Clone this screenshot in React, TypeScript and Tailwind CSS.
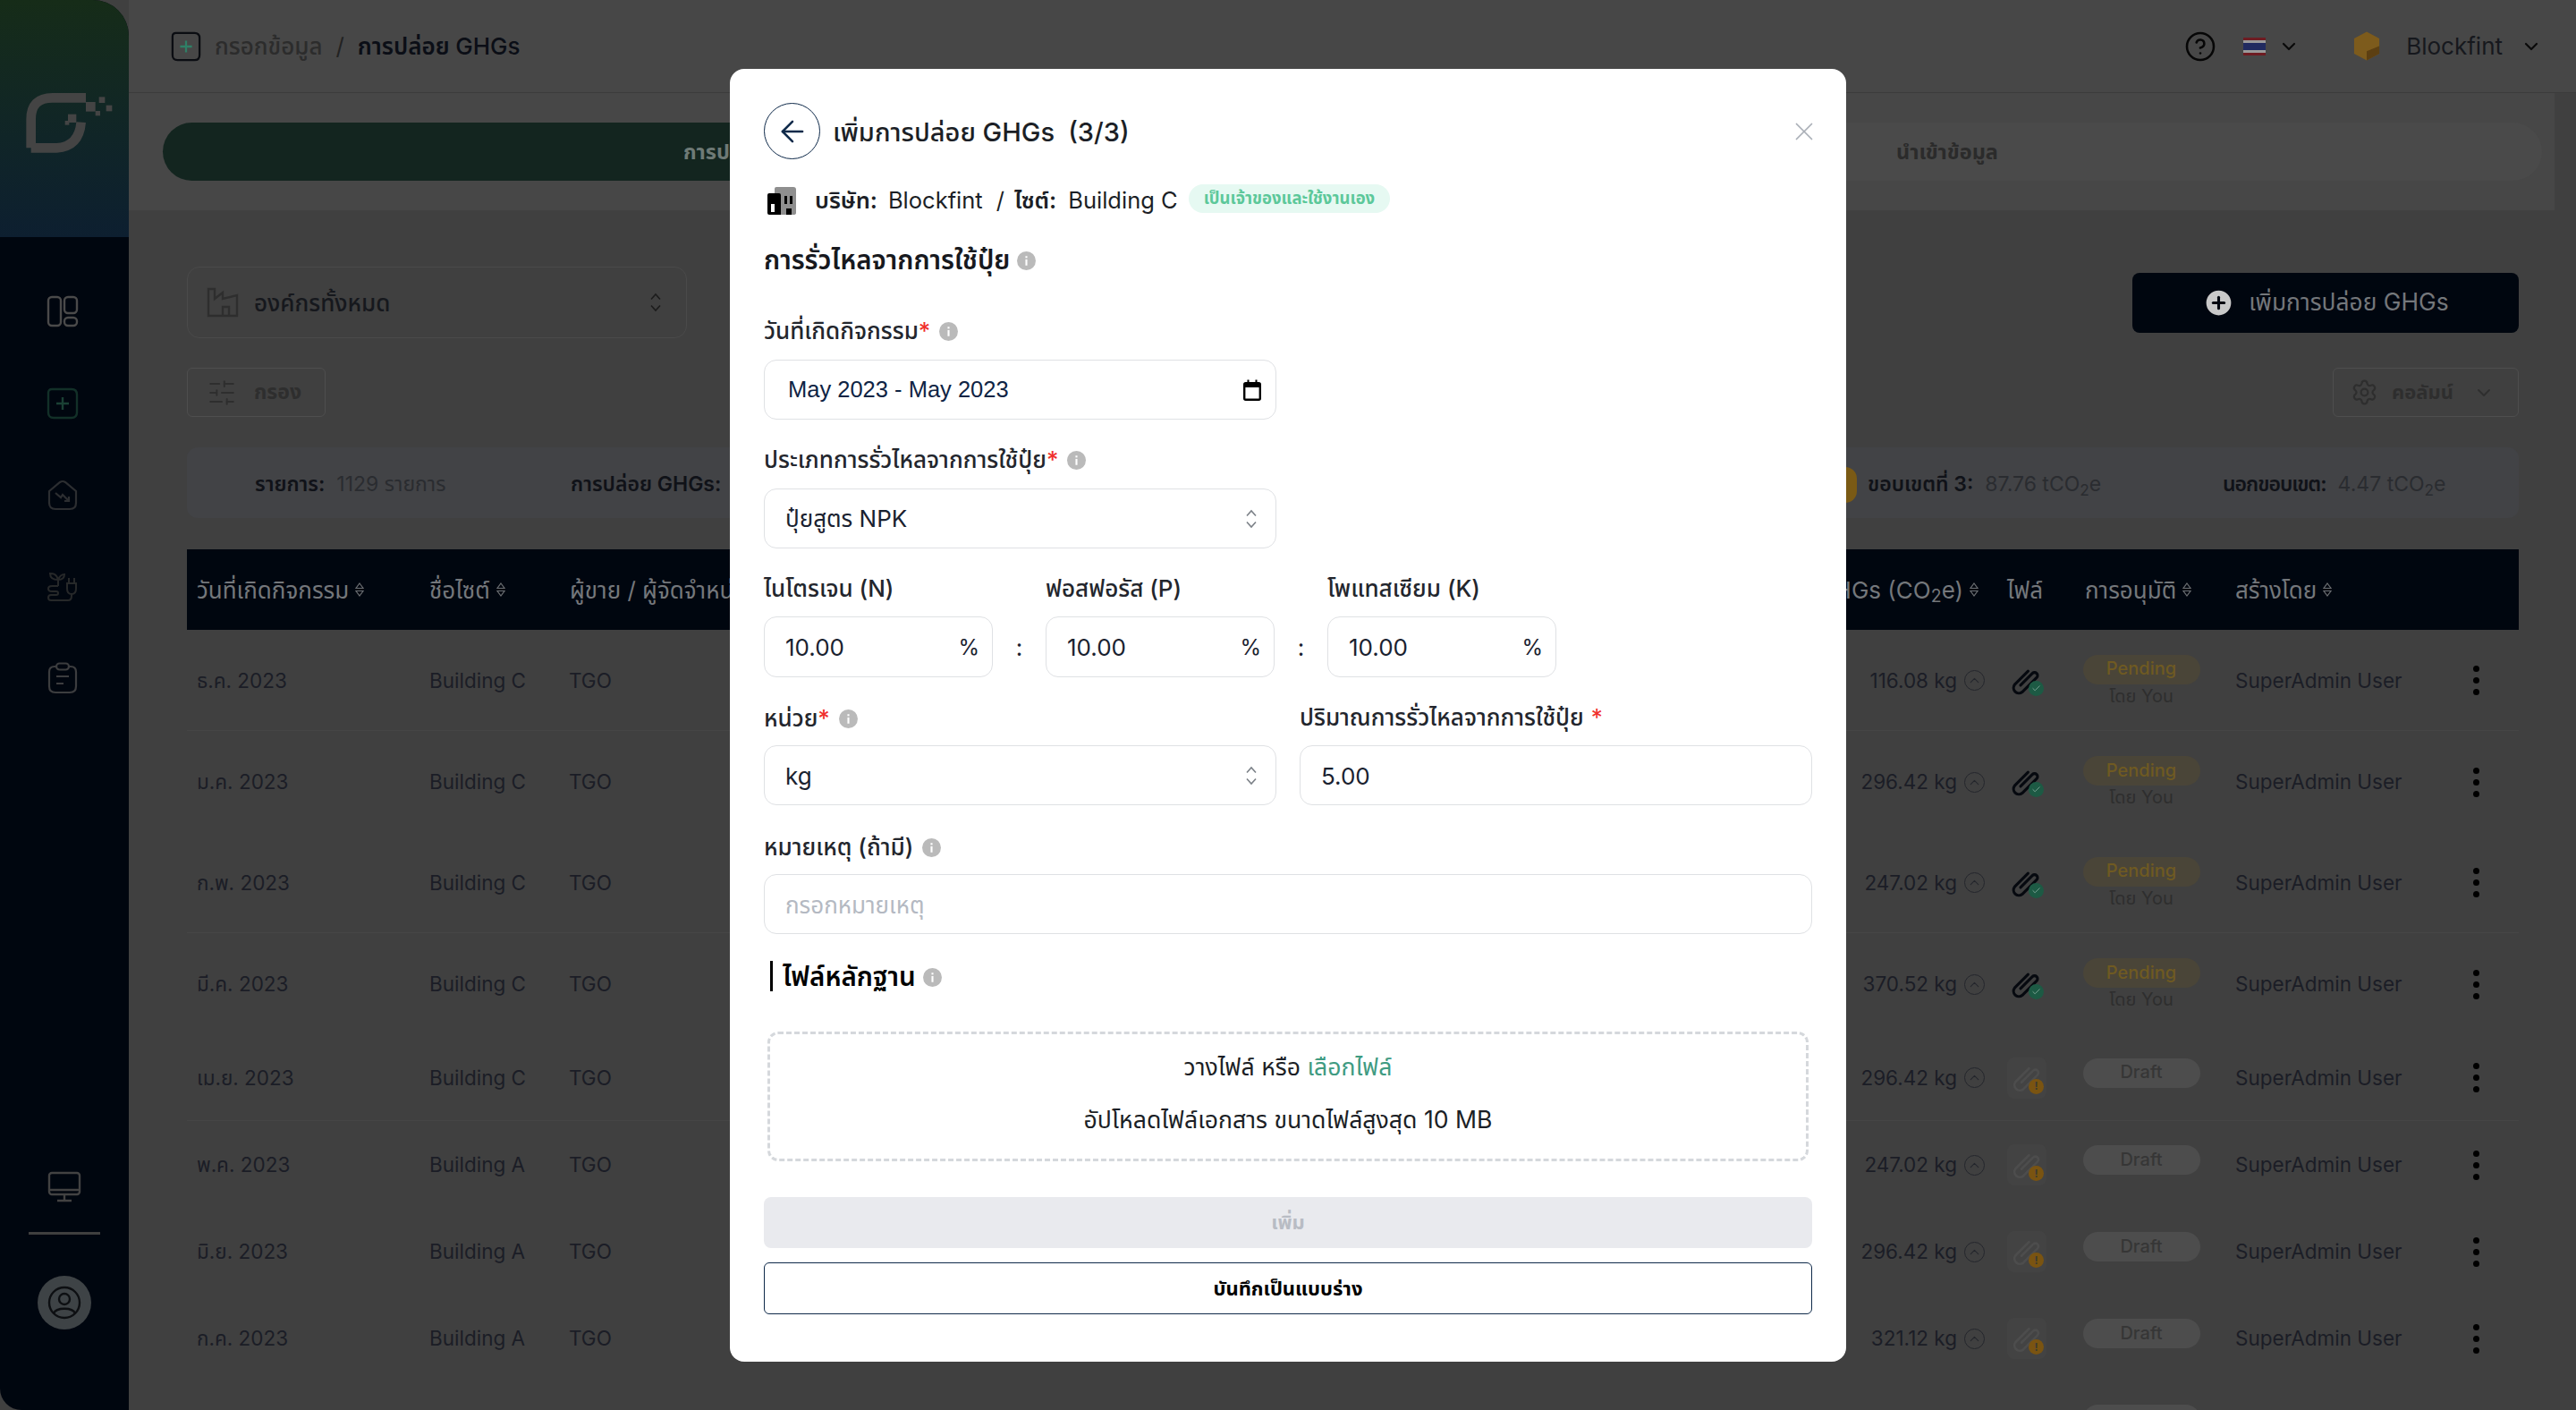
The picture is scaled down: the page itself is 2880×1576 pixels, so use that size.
import React from 'react'
import { ArrowLeft, X, Check, ChevronDown, ChevronUp, CirclePlus, SlidersHorizontal, Settings, CircleHelp } from 'lucide-react'

type Row = {
  date: string
  site: string
  value: string
  status: 'Pending' | 'Draft'
  line?: boolean
}

const rows: Row[] = [
  { date: 'ธ.ค. 2023', site: 'Building C', value: '116.08 kg', status: 'Pending', line: true },
  { date: 'ม.ค. 2023', site: 'Building C', value: '296.42 kg', status: 'Pending' },
  { date: 'ก.พ. 2023', site: 'Building C', value: '247.02 kg', status: 'Pending', line: true },
  { date: 'มี.ค. 2023', site: 'Building C', value: '370.52 kg', status: 'Pending' },
  { date: 'เม.ย. 2023', site: 'Building C', value: '296.42 kg', status: 'Draft', line: true },
  { date: 'พ.ค. 2023', site: 'Building A', value: '247.02 kg', status: 'Draft' },
  { date: 'มิ.ย. 2023', site: 'Building A', value: '296.42 kg', status: 'Draft' },
  { date: 'ก.ค. 2023', site: 'Building A', value: '321.12 kg', status: 'Draft' },
]

const tableCols = 'grid grid-cols-[260px_157px_1fr_300px_87px_168px_252px_76px] items-center'

const Logo = () => (
  <svg width="120" height="100" viewBox="0 0 360 300" fill="#444444">
    <path d="M44 226V130Q44 58 116 58H228M44 226H130Q205 222 212 140" fill="none" stroke="#444444" strokeWidth="32" />
    <rect x="228" y="72" width="32" height="32" />
    <rect x="272" y="55" width="20" height="20" />
    <rect x="296" y="83" width="20" height="20" />
    <rect x="260" y="102" width="16" height="16" />
    <rect x="168" y="113" width="28" height="28" />
    <rect x="158" y="135" width="14" height="14" />
  </svg>
)

const DashIcon = () => (
  <svg width="36" height="36" viewBox="0 0 36 36" fill="none" stroke="#4a4a4a" strokeWidth="2.4">
    <rect x="2" y="2" width="14" height="32" rx="4" />
    <rect x="20" y="2" width="14" height="18" rx="4" />
    <rect x="20" y="25" width="14" height="9" rx="4" />
  </svg>
)

const PlusBox = ({ color, plus, size }: { color: string; plus: string; size: number }) => (
  <svg width={size} height={size} viewBox="0 0 36 36" fill="none" stroke={color} strokeWidth="2.4">
    <path d="M6 2H28Q34 2 34 8V28Q34 34 28 34H8Q2 34 2 28V6Q2 2 6 2Z" />
    <path d="M18 11V25M11 18H25" stroke={plus} />
  </svg>
)

const HomeIcon = () => (
  <svg width="36" height="36" viewBox="0 0 36 36" fill="none" stroke="#2c2e31" strokeWidth="2.2">
    <path d="M3 14L15 4Q18 2 21 4L33 14V27Q33 34 26 34H10Q3 34 3 27Z" />
    <path d="M10 16L16 21L18 18L25 25M25 20V25H20" />
  </svg>
)

const PlantIcon = () => (
  <svg width="36" height="36" viewBox="0 0 36 36" fill="none" stroke="#262829" strokeWidth="2">
    <path d="M13 17V10M13 10C11 3 7 3 4 3C4 8 8 10 13 10ZM13 10C15 5 18 4 20 4C20 8 17 10 13 10Z" />
    <path d="M13 17H6Q2 17 2 20Q2 23 6 23H11Q13 23 13 25Q13 27 11 27H5Q2 27 2 30Q2 33 5 33H24Q28 33 28 28V26" />
    <path d="M23 14H33V20Q33 26 28 26Q23 26 23 20ZM25 14V8M31 14V8" />
  </svg>
)

const ClipboardIcon = () => (
  <svg width="36" height="36" viewBox="0 0 36 36" fill="none" stroke="#3c3d3f" strokeWidth="2.2">
    <path d="M11 5H9Q3 5 3 11V27Q3 34 10 34H26Q33 34 33 27V11Q33 5 27 5H25" />
    <rect x="11" y="1.5" width="14" height="7" rx="3.5" />
    <path d="M11 16H25M11 24H19" />
  </svg>
)

const MonitorIcon = () => (
  <svg width="38" height="36" viewBox="0 0 38 36" fill="none" stroke="#424242" strokeWidth="2.4">
    <rect x="2" y="2" width="34" height="24" rx="3" />
    <path d="M2 21H36M19 26V33M11 33H27" />
  </svg>
)

const Factory = () => (
  <svg width="36" height="34" viewBox="0 0 36 34" fill="none" stroke="#2e2e2e" strokeWidth="2.4">
    <path d="M2 32V2H9V13L18 6V13L34 9V32Z" />
    <path d="M18 32V22H25V32" />
  </svg>
)

const Sort = () => (
  <svg width="10" height="16" viewBox="0 0 10 16" fill="none" stroke="#6b6e72" strokeWidth="1.2" className="shrink-0">
    <path d="M5 1L9 6.5H1ZM1 9.5H9L5 15Z" />
  </svg>
)

const UpDown = ({ color = '#7b8087' }: { color?: string }) => (
  <svg width="14" height="22" viewBox="0 0 14 22" fill="none" stroke={color} strokeWidth="1.6" className="shrink-0">
    <path d="M2 7.5L7 2L12 7.5M2 14.5L7 20L12 14.5" />
  </svg>
)

const Info = ({ size = 21 }: { size?: number }) => (
  <svg width={size} height={size} viewBox="0 0 20 20" className="shrink-0 translate-y-[1px]">
    <circle cx="10" cy="10" r="10" fill="#bababa" />
    <rect x="9" y="8.5" width="2" height="6.5" fill="#ffffff" />
    <rect x="9" y="5" width="2" height="2" fill="#ffffff" />
  </svg>
)

const Buildings = () => (
  <svg width="33" height="32" viewBox="0 0 33 32">
    <path d="M9 3Q9 1 11 1H30Q33 1 33 4V30Q33 32 30 32H9Z" fill="#8f8f8f" />
    <path d="M1 10Q1 8 3 8H14Q16 8 16 10V32H3Q1 32 1 30Z" fill="#000000" />
    <rect x="5" y="20" width="4" height="9" fill="#ffffff" />
    <rect x="20" y="11" width="3" height="9" fill="#000000" />
    <rect x="26" y="11" width="3" height="9" fill="#000000" />
    <rect x="22" y="25" width="6" height="7" fill="#000000" />
  </svg>
)

const CalendarIcon = () => (
  <svg width="20" height="24" viewBox="0 0 20 24" fill="none" className="shrink-0">
    <rect x="1.2" y="4.2" width="17.6" height="18.6" rx="1.5" stroke="#000000" strokeWidth="2.4" />
    <rect x="1" y="4" width="18" height="5" fill="#000000" />
    <rect x="4.5" y="0.5" width="2" height="4" fill="#000000" />
    <rect x="13.5" y="0.5" width="2" height="4" fill="#000000" />
  </svg>
)

const Clip = ({ color, width }: { color: string; width: number }) => (
  <svg width="36" height="36" viewBox="0 0 30 30" fill="none" stroke={color} strokeWidth={width} strokeLinecap="round" strokeLinejoin="round" className="shrink-0">
    <path d="M10 19L21 8a2.8 2.8 0 0 1 4 4L11.5 25.5a5 5 0 0 1-7-7L17 6" />
  </svg>
)

const FileCell = ({ ok }: { ok: boolean }) => {
  if (ok) {
    return (
      <div className="relative ml-[3px] flex h-[44px] w-[44px] items-center">
        <Clip color="#06090f" width={2.6} />
        <div className="absolute left-[21px] top-[22px] flex h-[17px] w-[17px] items-center justify-center rounded-full bg-[#1d5a44]">
          <Check size={11} strokeWidth={2} color="#7fa596" />
        </div>
      </div>
    )
  }
  return (
    <div className="relative flex h-[46px] w-[44px] items-center justify-center rounded-lg bg-[#434343]">
      <Clip color="#4d4d4d" width={2.2} />
      <div className="absolute left-[24px] top-[24px] flex h-[17px] w-[17px] items-center justify-center rounded-full bg-[#7a5411] text-[12px] font-bold leading-none text-[#3d3a33]">
        !
      </div>
    </div>
  )
}

const TableRow = ({ row }: { row: Row }) => (
  <div
    className={`${tableCols} pt-[1px] text-[22.5px] text-[#1b1d26] ${
      row.status === 'Pending' ? 'h-[113px]' : 'h-[97px]'
    } ${row.line ? 'border-b border-[#464646]' : ''}`}
  >
    <div className="pl-[11px]">{row.date}</div>
    <div className="pl-[11px]">{row.site}</div>
    <div className="pl-[10px]">TGO</div>
    <div className="flex items-center justify-end gap-[8px] pr-[14px]">
      <span>{row.value}</span>
      <div className="flex h-[23px] w-[23px] items-center justify-center rounded-full border border-[#24262c]">
        <ChevronUp size={17} strokeWidth={1.5} color="#24262c" />
      </div>
    </div>
    <div className="pl-[11px]">
      <FileCell ok={row.status === 'Pending'} />
    </div>
    <div className="flex flex-col items-center pr-[20px]">
      {row.status === 'Pending' ? (
        <>
          <div className="flex h-[33px] w-[131px] items-center justify-center rounded-full bg-[#4a4538] pb-[2px] text-[20px] font-medium text-[#6f5a22]">Pending</div>
          <div className="h-[25px] text-[20px] leading-[26px] text-[#2e2e2e]">โดย You</div>
        </>
      ) : (
        <>
          <div className="flex h-[33px] w-[131px] items-center justify-center rounded-full bg-[#4d4d4d] pb-[2px] text-[20px] font-medium text-[#363636]">Draft</div>
          <div className="h-[11px]" />
        </>
      )}
    </div>
    <div className="pl-[11px]">SuperAdmin User</div>
    <div className="flex flex-col gap-[6px] pl-[25px]">
      <div className="h-[7px] w-[7px] rounded-full bg-[#000000]" />
      <div className="h-[7px] w-[7px] rounded-full bg-[#000000]" />
      <div className="h-[7px] w-[7px] rounded-full bg-[#000000]" />
    </div>
  </div>
)

const HeadCell = ({ text, className }: { text: React.ReactNode; className?: string }) => (
  <div className={`flex items-center gap-[7px] ${className ?? ''}`}>
    <span className="whitespace-nowrap">{text}</span>
    <Sort />
  </div>
)

const Label = ({ text, required, info, className }: { text: string; required?: boolean; info?: boolean; className?: string }) => (
  <div className={`flex h-[40px] items-center gap-[10px] text-[26px] font-medium text-[#23262d] ${className ?? ''}`}>
    <span className="whitespace-nowrap">
      {text}
      {required && <span className="text-[#f0302c]">*</span>}
    </span>
    {info && <Info />}
  </div>
)

const Field = ({ children, className }: { children: React.ReactNode; className?: string }) => (
  <div className={`flex items-center rounded-[14px] border border-[#dfe1e4] pl-[23px] pt-[1px] text-[26px] text-[#1a2230] ${className ?? ''}`}>
    {children}
  </div>
)

const Npk = ({ label }: { label: string }) => (
  <div className="w-[256px]">
    <Label text={label} />
    <Field className="mt-[12px] h-[68px] justify-between pr-[14px]">
      <span>10.00</span>
      <span className="text-[24px]">%</span>
    </Field>
  </div>
)

export default function App() {
  return (
    <div className="relative flex h-screen w-screen overflow-hidden bg-[#404040] font-['Inter','Noto_Sans_Thai','Noto_Sans',sans-serif]">
      {/* sidebar */}
      <aside className="flex w-[144px] shrink-0 flex-col rounded-tr-[40px] rounded-bl-[24px] bg-[#00060f]">
        <div className="flex h-[265px] items-start rounded-tr-[40px] bg-gradient-to-b from-[#162c18] to-[#0d1f30] pl-[20px] pt-[90px]">
          <Logo />
        </div>
        <div className="mt-[65px] flex flex-col items-center gap-[66.5px] pr-[4px]">
          <DashIcon />
          <PlusBox color="#123028" plus="#1a4034" size={36} />
          <HomeIcon />
          <PlantIcon />
          <ClipboardIcon />
        </div>
        <div className="mt-auto flex flex-col items-center pb-[90px]">
          <MonitorIcon />
          <div className="mt-[32px] h-[3px] w-[80px] bg-[#3f3f3f]" />
          <div className="mt-[46px] flex h-[60px] w-[60px] items-center justify-center rounded-full bg-[#3e4346]">
            <svg width="38" height="38" viewBox="0 0 38 38" fill="none" stroke="#0d0f12" strokeWidth="2.4">
              <circle cx="19" cy="19" r="17" />
              <circle cx="19" cy="15" r="6" />
              <path d="M7 31C10 24 28 24 31 31" />
            </svg>
          </div>
        </div>
      </aside>

      <div className="flex min-w-0 flex-1 flex-col">
        {/* header */}
        <header className="flex h-[104px] shrink-0 items-center border-b border-[#3c3c3c] bg-[#474747] pl-[47px] pr-[38px]">
          <PlusBox color="#0b0d12" plus="#2f7f66" size={34} />
          <span className="ml-[15px] text-[26px] font-medium text-[#2c2c2c]">กรอกข้อมูล</span>
          <span className="ml-[15px] text-[26px] text-[#222222]">/</span>
          <span className="ml-[15px] text-[26px] font-semibold text-[#0b0e16]">การปล่อย <span className="font-medium">GHGs</span></span>
          <div className="ml-auto flex items-center">
            <CircleHelp size={36} strokeWidth={1.7} color="#060606" />
            <div className="ml-[30px] flex h-[20px] w-[25px] flex-col">
              <div className="h-[3px] bg-[#6e1c22]" />
              <div className="h-[3px] bg-[#9a9a9a]" />
              <div className="h-[8px] bg-[#212b60]" />
              <div className="h-[3px] bg-[#9a9a9a]" />
              <div className="h-[3px] bg-[#6e1c22]" />
            </div>
            <ChevronDown size={24} strokeWidth={2.2} color="#0a0a0a" className="ml-[14px]" />
            <svg width="30" height="35" viewBox="0 0 32 36" className="ml-[60px]">
              <path d="M16 1L31 9V27L16 35L1 27V9Z" fill="#7d5b1c" />
              <path d="M31 18V27L16 35V24Z" fill="#5c3f12" />
            </svg>
            <span className="ml-[29px] text-[26px] text-[#16181d]">Blockfint</span>
            <ChevronDown size={24} strokeWidth={2.2} color="#0a0a0a" className="ml-[20px]" />
          </div>
        </header>

        {/* tabs */}
        <div className="mr-[24px] flex h-[131px] shrink-0 items-center bg-[#474747] pl-[38px] pr-[14px]">
          <div className="flex h-[65px] w-full rounded-full bg-[#4a4a4a]">
            <div className="flex flex-1 items-center justify-center rounded-full bg-[#13251f] text-[23.5px] font-bold text-[#6e7a76]">การปล่อย GHGs</div>
            <div className="flex flex-1 items-center justify-center text-[23.5px] font-bold text-[#2b2b2b]">นำเข้าข้อมูล</div>
          </div>
        </div>

        <main className="min-h-0 flex-1 pl-[65px] pr-[64px] pt-[63px]">
          <div className="flex h-[80px] items-center justify-between">
            <div className="flex h-[80px] w-[559px] items-center rounded-[14px] border border-[#4a4a4a] pl-[21px] pr-[27px]">
              <Factory />
              <span className="ml-[17px] text-[26px] font-medium text-[#16181d]">องค์กรทั้งหมด</span>
              <div className="ml-auto"><UpDown color="#1c1c1c" /></div>
            </div>
            <div className="flex h-[67px] w-[432px] items-center justify-center rounded-lg bg-[#00060f] text-[26.4px] text-[#74777b]">
              <CirclePlus size={37} fill="#c9c9c9" color="#00060f" strokeWidth={2} />
              <span className="ml-[15px]">เพิ่มการปล่อย GHGs</span>
            </div>
          </div>

          <div className="mt-[33px] flex h-[55px] items-center justify-between">
            <div className="flex h-[55px] w-[155px] items-center rounded-md border border-[#4e4e4e] pl-[21px] text-[23px] font-bold text-[#2e2e2e]">
              <SlidersHorizontal size={34} strokeWidth={1.4} color="#2e2e2e" />
              <span className="ml-[19px]">กรอง</span>
            </div>
            <div className="flex h-[55px] w-[208px] items-center rounded-md border border-[#4e4e4e] pl-[19px] text-[22px] font-bold text-[#2e2e2e]">
              <Settings size={31} strokeWidth={1.7} color="#2e2e2e" />
              <span className="ml-[15px]">คอลัมน์</span>
              <ChevronDown size={24} strokeWidth={1.8} color="#2e2e2e" className="ml-[22px]" />
            </div>
          </div>

          <div className="mt-[34px] flex h-[79px] items-center rounded-xl bg-[#424346] pl-[76px] pt-[4px] text-[23px] text-[#2a2c30]">
            <div className="w-[353px]"><b className="font-semibold text-[#101218]">รายการ:</b><span className="ml-[13px]">1129 รายการ</span></div>
            <div className="w-[1412px]"><b className="font-semibold text-[#101218]">การปล่อย GHGs:</b></div>
            <div className="flex w-[435px] items-center">
              <div className="h-[40px] w-[26px] rounded-full bg-[#7a5a15]" />
              <div className="ml-[12px]"><b className="font-semibold text-[#101218]">ขอบเขตที่ 3:</b><span className="ml-[13px]">87.76 tCO<sub>2</sub>e</span></div>
            </div>
            <div><b className="font-semibold tracking-[-1px] text-[#101218]">นอกขอบเขต:</b><span className="ml-[13px]">4.47 tCO<sub>2</sub>e</span></div>
          </div>

          <div className={`${tableCols} mt-[35px] h-[90px] bg-[#00060f] text-[26px] text-[#74777b]`}>
            <HeadCell text="วันที่เกิดกิจกรรม" className="pl-[11px]" />
            <HeadCell text="ชื่อไซต์" className="pl-[11px]" />
            <div className="whitespace-nowrap pl-[11px]">ผู้ขาย / ผู้จัดจำหน่าย</div>
            <HeadCell text={<>การปล่อย GHGs (CO<sub>2</sub>e)</>} className="justify-end pr-[21px]" />
            <div className="pl-[11px]">ไฟล์</div>
            <HeadCell text="การอนุมัติ" className="pl-[11px]" />
            <HeadCell text="สร้างโดย" className="pl-[11px]" />
            <div />
          </div>

          {rows.map((row) => (
            <TableRow key={row.date} row={row} />
          ))}
          {/* next row, only its status pill reaches the window */}
          <div className={`${tableCols} pt-[26px]`}>
            <div className="col-start-6 flex justify-center pr-[20px]">
              <div className="h-[33px] w-[131px] rounded-full bg-[#4d4d4d]" />
            </div>
          </div>
        </main>
      </div>

      {/* dialog */}
      <div className="absolute inset-0 flex justify-center pt-[77px]">
        <div className="h-[1445px] w-[1248px] rounded-2xl bg-white px-[38px] pt-[38px]">
          <div className="flex h-[63px] items-center">
            <div className="flex h-[63px] w-[63px] items-center justify-center rounded-full border-[1.5px] border-[#0f2a4a]">
              <ArrowLeft size={38} strokeWidth={1.6} color="#0f2a4a" />
            </div>
            <span className="ml-[14px] pt-[2px] text-[29px] font-medium text-[#1c1f26]">เพิ่มการปล่อย GHGs</span>
            <span className="ml-[15px] pt-[2px] text-[29px] font-medium text-[#1c1f26]">(3/3)</span>
            <X size={34} strokeWidth={1.2} color="#a9aeb6" className="ml-auto mr-[-8px]" />
          </div>

          <div className="mt-[28px] flex h-[36px] items-center text-[25.5px] text-[#1c1f26]">
            <div className="ml-[3px]"><Buildings /></div>
            <b className="ml-[21px] font-semibold">บริษัท:</b>
            <span className="ml-[12px]">Blockfint</span>
            <span className="ml-[15px]">/</span>
            <b className="ml-[11px] font-semibold">ไซต์:</b>
            <span className="ml-[13px]">Building C</span>
            <div className="ml-[12px] mb-[4px] flex h-[32px] items-center rounded-full bg-[#e6f9f2] px-[17px] text-[18.5px] font-bold text-[#5cc89a]">เป็นเจ้าของและใช้งานเอง</div>
          </div>

          <div className="mt-[28px] flex h-[40px] items-center gap-[8px] text-[29.5px] font-semibold text-[#17191e]">
            <span>การรั่วไหลจากการใช้ปุ๋ย</span>
            <Info />
          </div>

          <Label text="วันที่เกิดกิจกรรม" required info className="mt-[39px]" />
          <div className="mt-[13px] flex h-[67px] w-[573px] items-center justify-between rounded-[14px] border border-[#dfe1e4] pl-[26px] pr-[16px] font-['Liberation_Sans',sans-serif] text-[25.5px] text-[#0f2444]">
            <span>May 2023 - May 2023</span>
            <CalendarIcon />
          </div>

          <Label text="ประเภทการรั่วไหลจากการใช้ปุ๋ย" required info className="mt-[24px]" />
          <Field className="mt-[13px] h-[67px] w-[573px] justify-between pr-[20px]">
            <span className="mt-[-2px]">ปุ๋ยสูตร NPK</span>
            <UpDown />
          </Field>

          <div className="mt-[24px] flex">
            <Npk label="ไนโตรเจน (N)" />
            <div className="mt-[52px] flex h-[68px] w-[59px] items-center justify-center text-[26px] text-[#1a2230]">:</div>
            <Npk label="ฟอสฟอรัส (P)" />
            <div className="mt-[52px] flex h-[68px] w-[59px] items-center justify-center text-[26px] text-[#1a2230]">:</div>
            <Npk label="โพแทสเซียม (K)" />
          </div>

          <div className="mt-[25px] grid grid-cols-2 gap-x-[26px]">
            <div>
              <Label text="หน่วย" required info />
              <Field className="mt-[11px] h-[67px] justify-between pr-[20px]">
                <span>kg</span>
                <UpDown />
              </Field>
            </div>
            <div>
              <div className="flex h-[40px] items-center pb-[2px] text-[26px] font-medium text-[#23262d]">
                ปริมาณการรั่วไหลจากการใช้ปุ๋ย<span className="ml-[8px] font-normal text-[#f0302c]">*</span>
              </div>
              <Field className="mt-[11px] h-[67px]">5.00</Field>
            </div>
          </div>

          <Label text="หมายเหตุ (ถ้ามี)" info className="mt-[26px]" />
          <Field className="mt-[11px] h-[67px]">
            <input readOnly placeholder="กรอกหมายเหตุ" className="w-full text-[26px] outline-none placeholder:text-[#b4b9c2]" />
          </Field>

          <div className="mt-[30px] ml-[7px] flex h-[34px] items-center border-l-[3px] border-[#000000] pl-[11px] text-[29.5px] font-semibold text-[#000000]">
            <span>ไฟล์หลักฐาน</span>
            <div className="ml-[8px]"><Info /></div>
          </div>

          <div className="mx-[4px] mt-[45px] flex h-[145px] flex-col items-center justify-center gap-[19px] rounded-xl border-[3px] border-dashed border-[#d5d8dc] pb-[6px] text-[26.6px] text-[#1c1f26]">
            <div>วางไฟล์ หรือ <span className="text-[#3f9b82]">เลือกไฟล์</span></div>
            <div>อัปโหลดไฟล์เอกสาร ขนาดไฟล์สูงสุด 10 MB</div>
          </div>

          <div className="mt-[40px] flex h-[57px] items-center justify-center rounded-lg bg-[#e9eaee] text-[22px] font-bold text-[#b8bcc4]">เพิ่ม</div>
          <div className="mt-[16px] flex h-[58px] items-center justify-center rounded-md border border-[#0f2a4a] text-[22px] font-bold text-[#000000]">บันทึกเป็นแบบร่าง</div>
        </div>
      </div>
    </div>
  )
}
